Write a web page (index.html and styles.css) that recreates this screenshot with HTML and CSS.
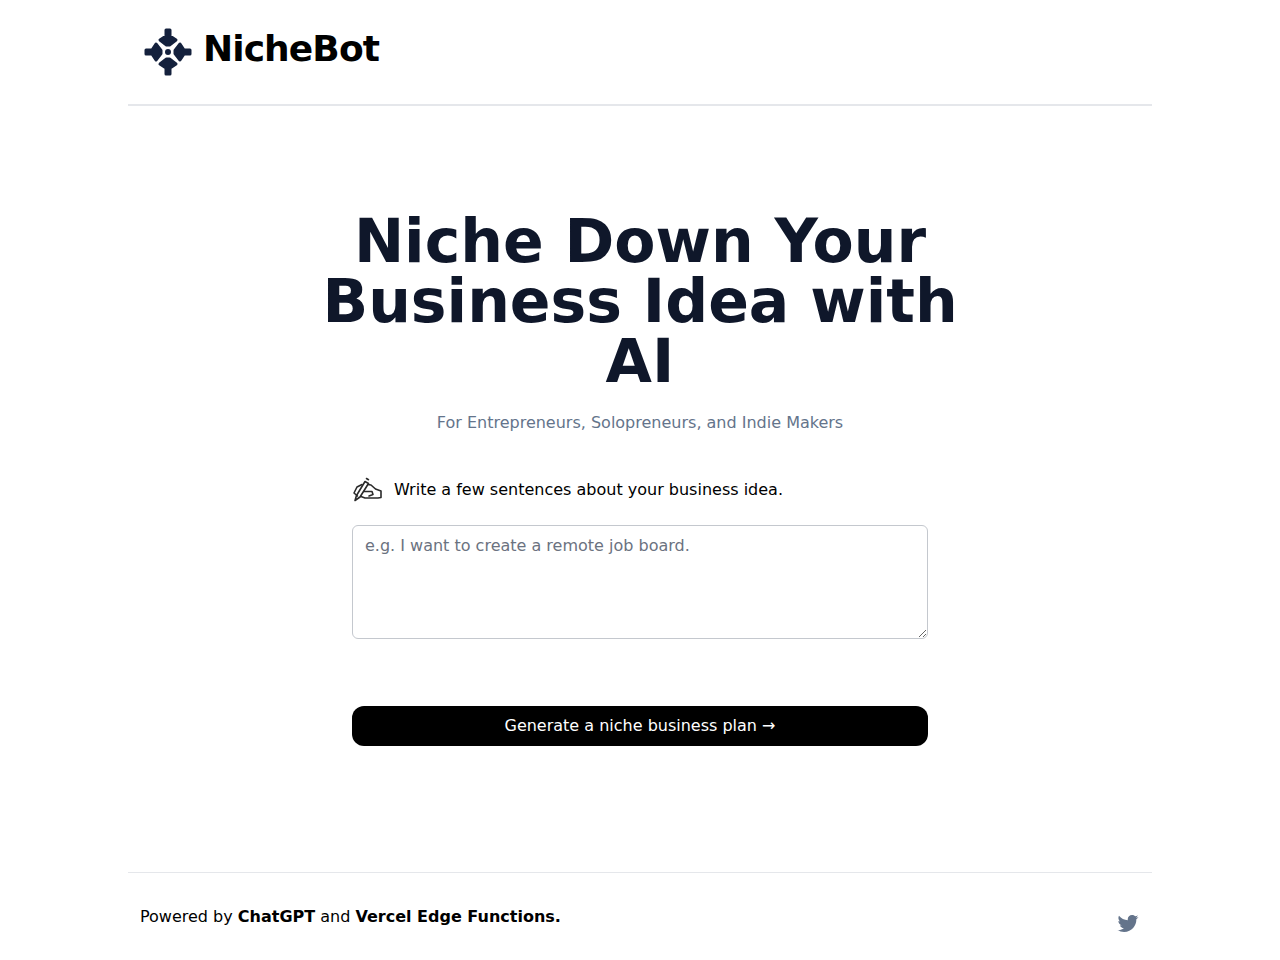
FILE: index.html
```html
<!DOCTYPE html>
<html lang="en">
<head>
  <meta charset="UTF-8" />
  <meta name="viewport" content="width=device-width, initial-scale=1.0"/>
  <title>NicheBot</title>
  <link rel="stylesheet" href="styles.css">
</head>
<body>
  <div class="page">
    <header class="header">
      <a class="brand" href="#">
        <svg class="logo" viewBox="0 0 48 48" width="48" height="48">
          <g fill="#14213d" stroke="#14213d" stroke-width="3" stroke-linejoin="round">
            <path d="M22 2h4v6l6 4-6.500 5h-3L16 12l6-4z" />
            <path d="M22 2h4v6l6 4-6.500 5h-3L16 12l6-4z" transform="rotate(90 24 24)" />
            <path d="M22 2h4v6l6 4-6.500 5h-3L16 12l6-4z" transform="rotate(180 24 24)" />
            <path d="M22 2h4v6l6 4-6.500 5h-3L16 12l6-4z" transform="rotate(270 24 24)" />
            <circle cx="24" cy="24" r="1.500" />
          </g>
        </svg>
        <span class="brand-name">NicheBot</span>
      </a>
    </header>

    <main class="main">
      <h1 class="title">Niche Down Your Business Idea with AI</h1>
      <p class="subtitle">For Entrepreneurs, Solopreneurs, and Indie Makers</p>

      <div class="form">
        <div class="step">
          <svg class="step-icon" viewBox="0 0 30 30" width="30" height="30" fill="none" stroke="#2a2a2a" stroke-width="1.600" stroke-linejoin="round" stroke-linecap="round">
            <path d="M3 25.500l1.500-5L13 6.500l3.500 2L8 22z" />
            <path d="M14.500 3.500l2 1.200" />
            <path d="M10 9.500L5 12l-3 6 3.500 3M16 9.500l3 .5 4.500 4 5.500 2v6.500l-3 .5H13l-4-1.500" />
            <path d="M12 16.500h8l1 3-4 1.500" />
          </svg>
          <p class="step-text">Write a few sentences about your business idea.</p>
        </div>
        <textarea class="idea" rows="4" placeholder="e.g. I want to create a remote job board."></textarea>
        <button class="generate" type="button">Generate a niche business plan →</button>
      </div>
    </main>

    <footer class="footer">
      <p class="powered">Powered by <a href="#">ChatGPT</a> and <a href="#">Vercel Edge Functions.</a></p>
      <a class="twitter" href="#" aria-label="Twitter">
        <svg viewBox="0 0 24 24" width="24" height="24" fill="#64748b">
          <path d="M22.460 6c-.770.350-1.600.580-2.460.690.880-.530 1.560-1.370 1.880-2.380-.830.500-1.750.850-2.720 1.050C18.370 4.500 17.260 4 16 4c-2.350 0-4.270 1.920-4.270 4.290 0 .340.040.670.110.980C8.280 9.090 5.110 7.380 3 4.790c-.370.630-.580 1.370-.580 2.150 0 1.490.750 2.810 1.910 3.560-.710 0-1.370-.200-1.950-.500v.030c0 2.080 1.480 3.820 3.440 4.210-.360.100-.740.150-1.130.150-.270 0-.540-.030-.800-.080.540 1.690 2.110 2.950 4 2.980-1.460 1.160-3.310 1.840-5.330 1.840-.340 0-.680-.020-1.020-.060C3.440 20.290 5.700 21 8.120 21 16 21 20.330 14.460 20.330 8.790c0-.190 0-.370-.010-.560.840-.600 1.560-1.360 2.140-2.230z" />
        </svg>
      </a>
    </footer>
  </div>
</body>
</html>
```

FILE: styles.css
```css
* {
  box-sizing: border-box;
}
body {
  margin: 0;
  font-family: 'DejaVu Sans', sans-serif;
  background: #ffffff;
  color: #000000;
}
a {
  color: inherit;
  text-decoration: none;
}
.page {
  width: 1024px;
  margin: 0 auto;
}
.header {
  height: 106px;
  padding: 28px 16px 0;
  border-bottom: 2px solid #e5e7eb;
}
.brand {
  display: flex;
  align-items: center;
  gap: 11px;
}
.brand-name {
  font-size: 36px;
  font-weight: 700;
  line-height: 40px;
  letter-spacing: -0.9px;
  margin-top: -7px;
}
.main {
  height: 766px;
  padding-top: 105px;
  display: flex;
  flex-direction: column;
  align-items: center;
}
.title {
  width: 672px;
  margin: 0;
  font-size: 60px;
  line-height: 60px;
  font-weight: 700;
  text-align: center;
  color: #0f172a;
}
.subtitle {
  margin: 20px 0 0;
  font-size: 16px;
  line-height: 24px;
  color: #64748b;
}
.form {
  width: 576px;
  margin-top: 40px;
}
.step {
  display: flex;
  align-items: center;
  gap: 12px;
}
.step-text {
  margin: 0;
  font-size: 16px;
  line-height: 24px;
}
.idea {
  display: block;
  width: 100%;
  height: 114px;
  margin-top: 20px;
  padding: 8px 12px;
  border: 1px solid #c4c8ce;
  border-radius: 6px;
  font-family: inherit;
  font-size: 16px;
  line-height: 24px;
}
.idea::placeholder {
  color: #6b7280;
}
.generate {
  display: block;
  width: 100%;
  height: 40px;
  margin-top: 67px;
  padding: 0 0 2px;
  border: 0;
  border-radius: 12px;
  background: #000000;
  color: #ffffff;
  font-family: inherit;
  font-size: 16px;
}
.footer {
  display: flex;
  justify-content: space-between;
  padding: 32px 12px 0;
  border-top: 1px solid #e5e7eb;
}
.powered {
  margin: 0;
  font-size: 16px;
  line-height: 24px;
}
.powered a {
  font-weight: 700;
}
.twitter {
  display: block;
  margin-top: 6px;
  height: 24px;
}
```
